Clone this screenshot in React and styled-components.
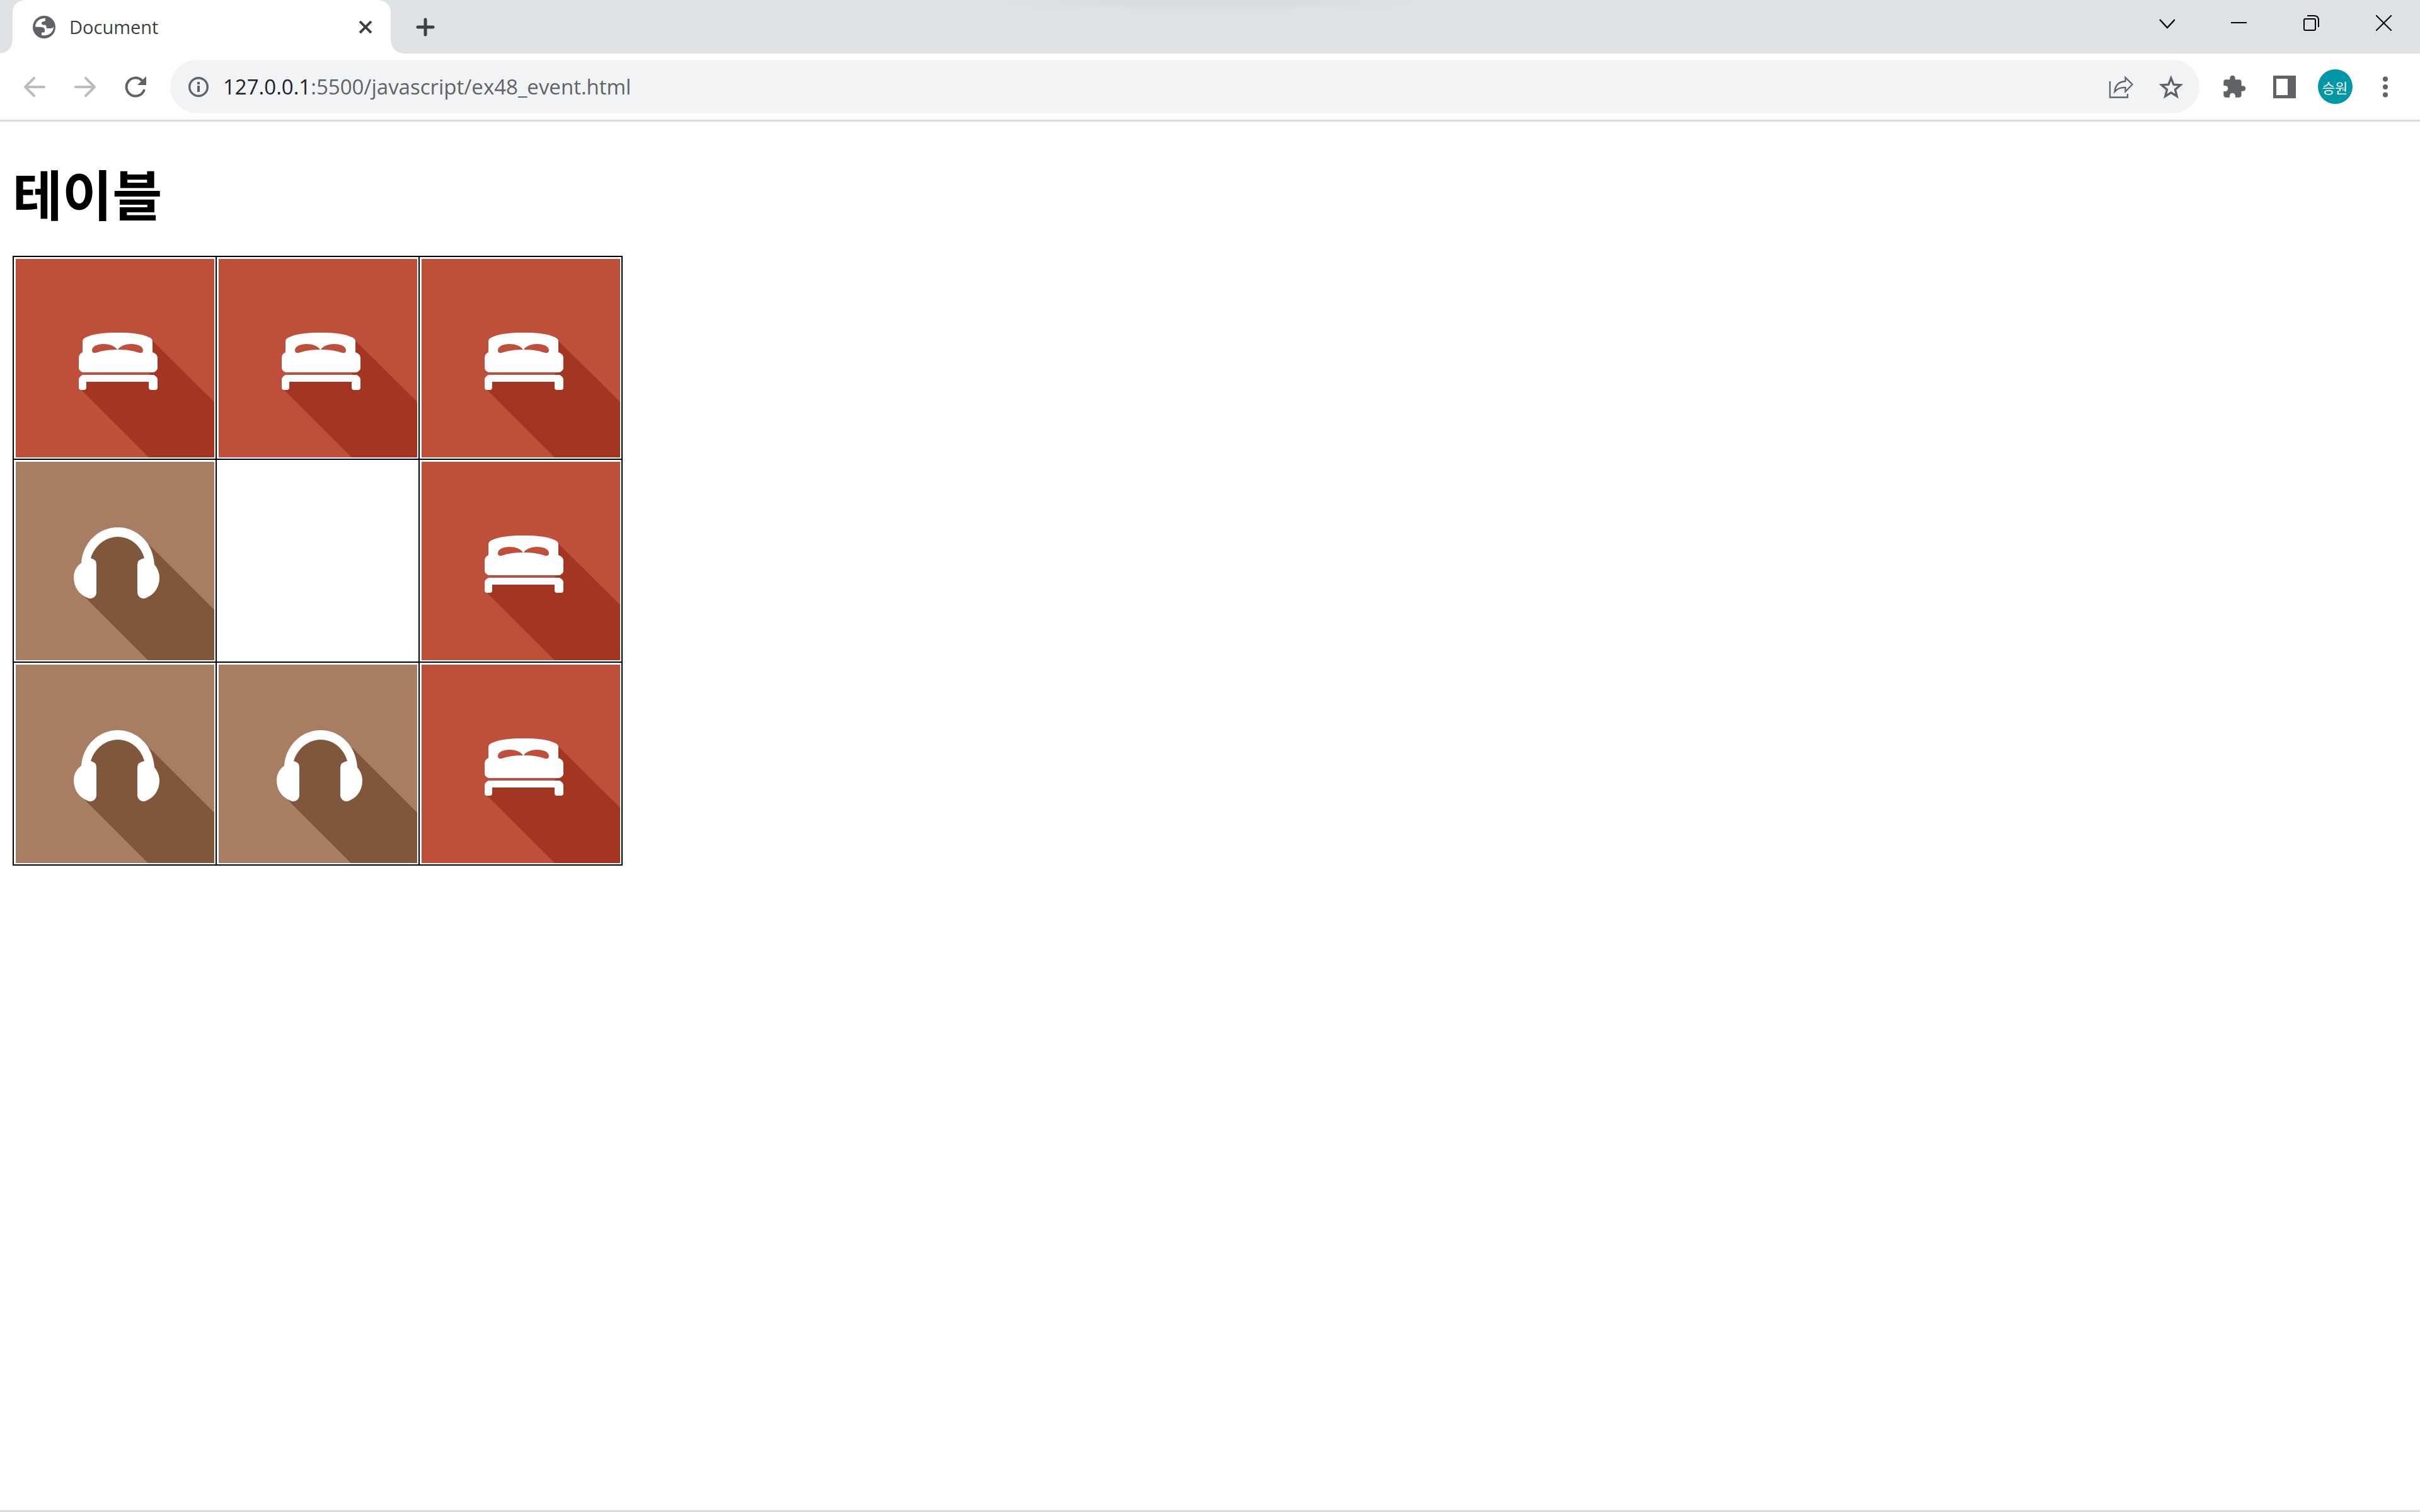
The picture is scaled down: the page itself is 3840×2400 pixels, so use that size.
import React from "react";
import styled, { createGlobalStyle } from "styled-components";

const GlobalStyle = createGlobalStyle`
  body {
    margin: 0;
    background: #fff;
  }
`;

const Browser = styled.div`
  display: flex;
  flex-direction: column;
  min-height: 100vh;
  box-sizing: border-box;
  border-bottom: 3px solid #dadada;
  font-family: "Open Sans", "Noto Sans CJK KR", sans-serif;
`;

const TabStrip = styled.header`
  display: flex;
  height: 85px;
  padding-left: 20px;
  background: radial-gradient(
    ellipse 320px 18px at 50% 0,
    #d8dbe0 40%,
    #dee1e6
  );
`;

const Tab = styled.div`
  position: relative;
  display: flex;
  align-items: center;
  box-sizing: border-box;
  width: 600px;
  padding: 0 20px 0 32px;
  gap: 22px;
  border-radius: 20px 20px 0 0;
  background: #fff;
  color: #3c4043;
  font-size: 29px;

  &::before,
  &::after {
    content: "";
    position: absolute;
    bottom: 0;
    width: 20px;
    height: 20px;
  }
  &::before {
    right: 100%;
    background: radial-gradient(circle at 0 0, transparent 19px, #fff 20px);
  }
  &::after {
    left: 100%;
    background: radial-gradient(circle at 100% 0, transparent 19px, #fff 20px);
  }
`;

const TabTitle = styled.span`
  flex: 1;
`;

const IconButton = styled.button`
  display: flex;
  align-items: center;
  justify-content: center;
  width: ${(props) => props.$size || 70}px;
  height: ${(props) => props.$size || 70}px;
  padding: 0;
  border: none;
  background: none;
  color: ${(props) => props.$color || "#5f6368"};
`;

const NewTab = styled(IconButton)`
  align-self: center;
  margin-left: 20px;
`;

const WindowButtons = styled.div`
  display: flex;
  margin-left: auto;
`;

const WindowButton = styled.button`
  display: flex;
  align-items: center;
  justify-content: center;
  width: 115px;
  height: 73px;
  padding: 0;
  border: none;
  background: none;
  color: #000;
`;

const Toolbar = styled.nav`
  display: flex;
  align-items: center;
  gap: 10px;
  height: 105px;
  padding: 0 20px;
  border-bottom: 3px solid #dadada;
  background: #fff;
`;

const AddressBar = styled.div`
  display: flex;
  flex: 1;
  align-items: center;
  gap: 10px;
  box-sizing: border-box;
  height: 85px;
  margin: 0 10px;
  padding: 0 10px;
  border-radius: 43px;
  background: #f1f3f4;
`;

const Url = styled.a`
  flex: 1;
  margin-left: -6px;
  color: #5f6368;
  font-size: 33px;
  text-decoration: none;
`;

const Host = styled.span`
  color: #202124;
`;

const Avatar = styled.span`
  display: flex;
  align-items: center;
  justify-content: center;
  width: 55px;
  height: 55px;
  border-radius: 50%;
  background: #0097a7;
  color: #fff;
  font-family: "Noto Sans CJK KR", sans-serif;
  font-size: 22px;
`;

const Page = styled.main`
  flex: 1;
  padding: 53px 20px;
  background: #fff;
`;

const Title = styled.h1`
  margin: 0 0 40px;
  font-family: "Noto Sans CJK KR", sans-serif;
  font-size: 86px;
  font-weight: bold;
  line-height: 120px;
  color: #000;
`;

const Board = styled.table`
  border: 2px solid #000;
  border-collapse: collapse;
`;

const Cell = styled.td`
  width: 315px;
  height: 315px;
  padding: 3px 2px 2px 3px;
  border: 2px solid #000;

  svg {
    display: block;
  }
`;

const Icon = ({ size, box = size, children, ...rest }) => (
  <svg
    width={size}
    height={size}
    viewBox={`0 0 ${box} ${box}`}
    fill="none"
    aria-hidden="true"
    {...rest}
  >
    {children}
  </svg>
);

const Globe = () => (
  <Icon size={36}>
    <circle cx="18" cy="18" r="18" fill="#5f6368" />
    <path
      d="M4 17.500C4 10 10 4 20 4v3.500c0 1.500-6 1.500-6 4s1 3 4 3 4 2 4 5.500h7q3 0 4-3C33 25 27 33 14 31v-4.500h4q1 0 1-4c0-3-2-4.500-6-4.500z"
      fill="#fff"
    />
  </Icon>
);

const Arrow = ({ flip }) => (
  <Icon size={34} stroke="#babcbe" strokeWidth="4" strokeLinecap="round">
    <path
      d={flip ? "M2 17h29M18 3l14 14-14 14" : "M32 17H3M16 3L2 17l14 14"}
      strokeLinejoin="round"
    />
  </Icon>
);

const Reload = () => (
  <Icon size={36}>
    <path
      d="M31.500 23.500A14.500 14.500 0 1 1 28 7.500"
      stroke="#5f6368"
      strokeWidth="4"
      strokeLinecap="round"
    />
    <path d="M35 1v14H21z" fill="#5f6368" />
  </Icon>
);

const Info = () => (
  <Icon size={32}>
    <circle cx="16" cy="16" r="14.300" stroke="#5f6368" strokeWidth="3.400" />
    <path d="M14 14h4v10h-4zM14 8h4v4h-4z" fill="#5f6368" />
  </Icon>
);

const Share = () => (
  <Icon size={40} stroke="#5f6368" strokeWidth="2.300">
    <path d="M3 11v25.500h28V31" />
    <path d="M10.500 27.500c1-10 7-16 17-16.500V5L38.500 16 27.500 27.500V21c-7-.5-12.500 1.500-17 6.500z" />
  </Icon>
);

const Star = () => (
  <Icon size={40} stroke="#5f6368" strokeWidth="3.400">
    <path d="M20 6l4 10.200 11 .8-8.500 7.100 2.700 10.700L20 29l-9.200 5.800 2.700-10.700L5 17l11-.8z" />
  </Icon>
);

const Puzzle = () => (
  <Icon size={40} box={24}>
    <path
      d="M20.500 11H19V7c0-1.100-.9-2-2-2h-4V3.500C13 2.120 11.880 1 10.500 1S8 2.120 8 3.500V5H4c-1.100 0-1.990.9-1.990 2v3.800H3.500c1.490 0 2.700 1.210 2.700 2.700s-1.210 2.700-2.700 2.700H2V20c0 1.100.9 2 2 2h3.800v-1.500c0-1.490 1.210-2.700 2.700-2.700 1.490 0 2.700 1.210 2.700 2.700V22H17c1.100 0 2-.9 2-2v-4h1.500c1.380 0 2.500-1.120 2.500-2.500S21.880 11 20.500 11z"
      fill="#5f6368"
    />
  </Icon>
);

const SidePanel = () => (
  <Icon size={36}>
    <path d="M0 0h36v36H0zM5 5v26h18V5z" fill="#5f6368" fillRule="evenodd" />
  </Icon>
);

const Dots = () => (
  <Icon size={36} fill="#5f6368">
    <circle cx="18" cy="5.500" r="4" />
    <circle cx="18" cy="18" r="4" />
    <circle cx="18" cy="30.500" r="4" />
  </Icon>
);

const BedTile = () => (
  <Icon size={315} role="img" aria-hidden="false" aria-label="bed">
    <path fill="#bd4f3b" d="M0 0h315v315H0z" />
    <path fill="#a33522" d="M217 130l98 97v88H211L103 207l9-12h100v-14h5z" />
    <path
      fill="#fff"
      fillRule="evenodd"
      d="M106 131q0-4 4-6c14-7 32-8 52-8s37 1 51 8q4 2 4 6v17q8 3 8 9v16q0 4-6 7H106q-6-3-6-7v-16q0-6 6-9zM121 145c0-12 32-14 40-1-12 0-22 1-34 5-4 1-6-1-6-4zM202 145c0-12-32-14-40-1 12 0 22 1 34 5 4 1 6-1 6-4z"
    />
    <path
      fill="#fff"
      d="M106 184h113q6 3 6 8v12q0 4-4 4h-6q-4 0-4-4v-9h-99v9q0 4-4 4h-4q-4 0-4-4v-12q0-5 6-8z"
    />
  </Icon>
);

const HeadphonesTile = () => (
  <Icon size={315} role="img" aria-hidden="false" aria-label="headphones">
    <path fill="#a77e62" d="M0 0h315v315H0z" />
    <path
      fill="#80573a"
      d="M213 133l102 102v80H210L110 215l9-61q8-38 43-38 20 0 51 17z"
    />
    <path
      fill="#fff"
      d="M104 161c2-33 28-57 58-57s56 24 58 59c5 6 8 13 8 21 0 16-9 27-21 32-7 3-14-2-14-9v-44q0-8 11-10c-5-20-23-34-42-34s-37 14-43 34q9 2 9 10v44c0 8-8 12-14 9-14-6-22-17-22-33q0-13 11-22z"
    />
  </Icon>
);

const tiles = {
  bed: BedTile,
  headphones: HeadphonesTile,
};

const board = [
  ["bed", "bed", "bed"],
  ["headphones", null, "bed"],
  ["headphones", "headphones", "bed"],
];

const App = () => {
  return (
    <Browser>
      <GlobalStyle />
      <TabStrip>
        <Tab>
          <Globe />
          <TabTitle>Document</TabTitle>
          <IconButton $size={40} $color="#3c4043" aria-label="Close tab">
            <Icon size={20} stroke="currentColor" strokeWidth="4">
              <path d="M1 1l18 18M19 1L1 19" />
            </Icon>
          </IconButton>
        </Tab>
        <NewTab $color="#3c4043" aria-label="New tab">
          <Icon
            size={30}
            stroke="currentColor"
            strokeWidth="5"
            strokeLinecap="round"
          >
            <path d="M15 3v24M3 15h24" />
          </Icon>
        </NewTab>
        <WindowButtons>
          <WindowButton aria-label="Search tabs">
            <Icon size={26} stroke="currentColor" strokeWidth="2.500">
              <path d="M2 7l12 13L26 7" />
            </Icon>
          </WindowButton>
          <WindowButton aria-label="Minimize">
            <Icon size={25} stroke="currentColor" strokeWidth="2">
              <path d="M0 12h25" />
            </Icon>
          </WindowButton>
          <WindowButton aria-label="Restore">
            <Icon size={25} stroke="currentColor" strokeWidth="2">
              <rect x="1" y="6" width="18" height="18" rx="2" />
              <path d="M6 1h11q7 0 7 7v11" />
            </Icon>
          </WindowButton>
          <WindowButton aria-label="Close">
            <Icon size={25} stroke="currentColor" strokeWidth="2">
              <path d="M0 0l25 25M25 0L0 25" />
            </Icon>
          </WindowButton>
        </WindowButtons>
      </TabStrip>
      <Toolbar>
        <IconButton aria-label="Back">
          <Arrow />
        </IconButton>
        <IconButton aria-label="Forward">
          <Arrow flip />
        </IconButton>
        <IconButton aria-label="Reload">
          <Reload />
        </IconButton>
        <AddressBar>
          <IconButton aria-label="Site information">
            <Info />
          </IconButton>
          <Url href="#">
            <Host>127.0.0.1</Host>:5500/javascript/ex48_event.html
          </Url>
          <IconButton aria-label="Share">
            <Share />
          </IconButton>
          <IconButton aria-label="Bookmark">
            <Star />
          </IconButton>
        </AddressBar>
        <IconButton aria-label="Extensions">
          <Puzzle />
        </IconButton>
        <IconButton aria-label="Side panel">
          <SidePanel />
        </IconButton>
        <IconButton aria-label="Profile">
          <Avatar>승원</Avatar>
        </IconButton>
        <IconButton aria-label="Menu">
          <Dots />
        </IconButton>
      </Toolbar>
      <Page>
        <Title>테이블</Title>
        <Board>
          <tbody>
            {board.map((row, y) => (
              <tr key={y}>
                {row.map((name, x) => {
                  const Tile = tiles[name];
                  return <Cell key={x}>{Tile && <Tile />}</Cell>;
                })}
              </tr>
            ))}
          </tbody>
        </Board>
      </Page>
    </Browser>
  );
};

export default App;
